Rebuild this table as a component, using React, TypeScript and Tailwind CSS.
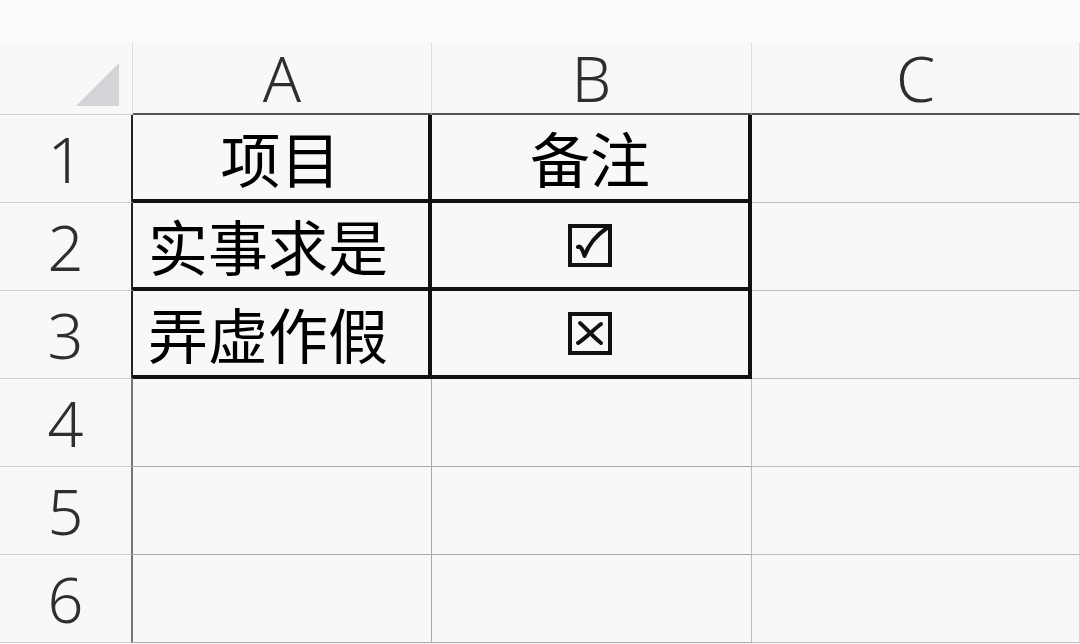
import React from "react";

const hdrFont = { fontFamily: '"Noto Sans", "Open Sans", sans-serif' };
const cjkFont = { fontFamily: '"Noto Sans CJK SC", "Noto Sans", sans-serif' };

function CheckBox({ checked }: { checked: boolean }) {
  return (
    <svg width="44" height="43" viewBox="0 0 44 43">
      <rect x="2" y="2" width="40" height="39" fill="none" stroke="#111" strokeWidth="4" />
      {checked ? (
        <path
          d="M10 23 C12.5 21.5 14.5 25 16.5 32 C20 22 27 12 39 4"
          fill="none"
          stroke="#111"
          strokeWidth="4"
          strokeLinecap="round"
          strokeLinejoin="round"
        />
      ) : (
        <>
          <path d="M12 11 C19 17 25 25 33 31" fill="none" stroke="#111" strokeWidth="4" strokeLinecap="round" />
          <path d="M33 12 C25 18 19 25 10 31" fill="none" stroke="#111" strokeWidth="4" strokeLinecap="round" />
        </>
      )}
    </svg>
  );
}

export default function App() {
  const rowNum = "flex items-center justify-center text-[63px] font-light text-[#2e2e2e] leading-none";
  const cjk = "text-[60px] font-normal text-black leading-none";
  return (
    <div className="w-[1080px] h-[644px] bg-[#f8f8f9] overflow-hidden">
      <div className="h-[42px] bg-[#fbfbfc]" />
      <div className="grid grid-cols-[133px_299px_320px_328px] grid-rows-[73px_88px_88px_88px_88px_88px_88px]">
        {/* header row */}
        <div className="border-b border-[#cfcfcf] border-r border-r-[#dcdcdc] flex items-center justify-end pr-[13px]">
          <svg width="43" height="43" viewBox="0 0 43 43" className="mt-[12px]">
            <polygon points="43,0 43,43 0,43" fill="#d4d4d8" />
          </svg>
        </div>
        <div className="border-b-2 border-b-[#555] border-r border-r-[#dcdcdc] flex items-center justify-center" style={hdrFont}>
          <span className="text-[63px] font-light text-[#2e2e2e] leading-none">A</span>
        </div>
        <div className="border-b-2 border-b-[#555] border-r border-r-[#dcdcdc] flex items-center justify-center" style={hdrFont}>
          <span className="text-[63px] font-light text-[#2e2e2e] leading-none">B</span>
        </div>
        <div className="border-b-2 border-b-[#555] border-r border-r-[#dcdcdc] flex items-center justify-center" style={hdrFont}>
          <span className="text-[63px] font-light text-[#2e2e2e] leading-none">C</span>
        </div>

        {/* row 1 */}
        <div className={`${rowNum} border-b border-[#cfcfcf] border-r-2 border-r-[#222]`} style={hdrFont}>1</div>
        <div className={`border-r-4 border-b-4 border-[#111] flex items-center justify-center ${cjk}`} style={cjkFont}>项目</div>
        <div className={`border-r-4 border-b-4 border-[#111] flex items-center justify-center ${cjk}`} style={cjkFont}>备注</div>
        <div className="border-b border-[#bdbdbd] border-r border-r-[#d6d6d6]" />

        {/* row 2 */}
        <div className={`${rowNum} border-b border-[#cfcfcf] border-r-2 border-r-[#222]`} style={hdrFont}>2</div>
        <div className={`border-r-4 border-b-4 border-[#111] flex items-center pl-[15px] ${cjk}`} style={cjkFont}>实事求是</div>
        <div className="border-r-4 border-b-4 border-[#111] flex items-center justify-center">
          <CheckBox checked />
        </div>
        <div className="border-b border-[#bdbdbd] border-r border-r-[#d6d6d6]" />

        {/* row 3 */}
        <div className={`${rowNum} border-b border-[#cfcfcf] border-r-2 border-r-[#222]`} style={hdrFont}>3</div>
        <div className={`border-r-4 border-b-4 border-[#111] flex items-center pl-[15px] ${cjk}`} style={cjkFont}>弄虚作假</div>
        <div className="border-r-4 border-b-4 border-[#111] flex items-center justify-center">
          <CheckBox checked={false} />
        </div>
        <div className="border-b border-[#bdbdbd] border-r border-r-[#d6d6d6]" />

        {/* rows 4-6 */}
        {["4", "5", "6"].map((n) => (
          <React.Fragment key={n}>
            <div className={`${rowNum} border-b border-[#cfcfcf] border-r-2 border-r-[#777]`} style={hdrFont}>{n}</div>
            <div className="border-b border-[#a8a8a8] border-r border-r-[#a8a8a8]" />
            <div className="border-b border-[#a8a8a8] border-r border-r-[#bdbdbd]" />
            <div className="border-b border-[#bdbdbd] border-r border-r-[#d6d6d6]" />
          </React.Fragment>
        ))}
      </div>
    </div>
  );
}
